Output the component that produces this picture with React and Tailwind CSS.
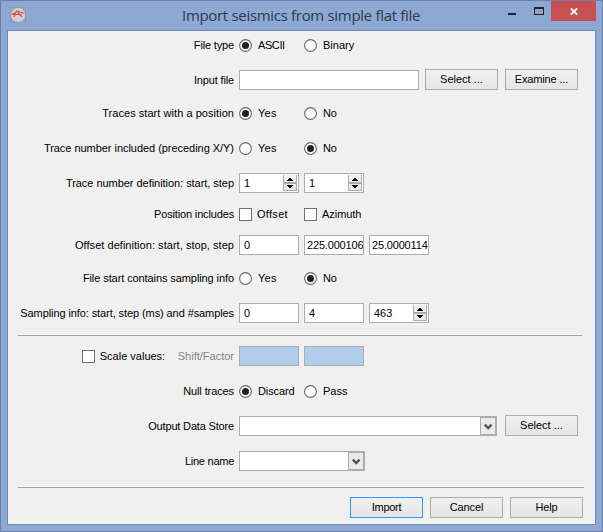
import React from "react";

function Radio({ on, label, cls = "" }) {
  return (
    <div className="flex h-5 w-[65px] shrink-0 items-center gap-1.5">
      <svg width="13" height="13" viewBox="0 0 13 13" className="shrink-0">
        <circle cx="6.5" cy="6.5" r="5.9" fill="#fff" stroke="#666" strokeWidth="1.1" />
        {on && <circle cx="6.5" cy="6.5" r="3.5" fill="#212121" />}
      </svg>
      <span className={cls}>{label}</span>
    </div>
  );
}

function Check({ label, cls = "" }) {
  return (
    <div className="flex h-5 w-[65px] shrink-0 items-center gap-[5px]">
      <span className="size-[13px] shrink-0 border border-[#707070] bg-white" />
      <span className={cls}>{label}</span>
    </div>
  );
}

function Field({ value = "", cls = "w-[60px] bg-white pl-1" }) {
  return (
    <div className={"h-5 shrink-0 overflow-hidden border border-[#abadb3] leading-[18px] " + cls}>
      {value}
    </div>
  );
}

function Spin({ value }) {
  return (
    <div className="flex h-5 w-[60px] shrink-0 justify-between border border-[#abadb3] bg-white pr-px pl-1 leading-[18px]">
      <span>{value}</span>
      <svg width="14" height="18" viewBox="0 0 14 18" shapeRendering="crispEdges">
        <rect x="0" y="1" width="14" height="16" fill="#acacac" />
        <rect x="1" y="1" width="12" height="7" fill="#f0f0f0" />
        <rect x="1" y="10" width="12" height="6" fill="#e9e9e9" />
        <path d="M6 4h2v1h1v1h1v1H4V6h1V5h1z" fill="#000" />
        <path d="M4 11h6v1H9v1H8v1H6v-1H5v-1H4z" fill="#000" />
      </svg>
    </div>
  );
}

function Combo({ cls }) {
  return (
    <div className={"flex h-5 shrink-0 justify-end border border-[#abadb3] bg-white " + cls}>
      <svg width="16" height="18" viewBox="0 0 16 18">
        <rect width="16" height="18" fill="#acacac" />
        <rect x="1" y="1" width="14" height="16" fill="#ebebeb" />
        <path d="M4.8 7.6L8.2 11l3.4-3.4" fill="none" stroke="#555" strokeWidth="2.4" />
      </svg>
    </div>
  );
}

function Button({ label, cls = "border-[#acacac]", text = "" }) {
  return (
    <button className={"flex h-[21px] w-[73px] shrink-0 items-center justify-center border bg-linear-to-b from-[#f0f0f0] to-[#e5e5e5] leading-[19px] " + cls}>
      <span className={text}>{label}</span>
    </button>
  );
}

function Row({ label, cls = "", mt, children }) {
  return (
    <div className={"flex h-5 items-center leading-5 " + mt}>
      <div className={"mr-[5px] flex w-[226px] shrink-0 justify-end " + cls}>{label}</div>
      {children}
    </div>
  );
}

function Rule({ cls }) {
  return <div className={"ml-[10px] h-0.5 border-t border-b border-t-white border-b-[#a0a0a0] " + cls} />;
}

function AppIcon() {
  return (
    <svg width="16" height="16" viewBox="0 0 16 16">
      <rect x="0.5" y="0.5" width="15" height="15" fill="#98a5c0" stroke="#8a9cbd" />
      <circle cx="8" cy="8" r="7" fill="#d4d0d0" />
      <path d="M1.5 7.5L5 6l2-2 3 1 4 1M6 5l-2 5M8 5l1 2 3 3M2 7.5h10" fill="none" stroke="#e04848" strokeWidth="1.2" />
    </svg>
  );
}

export default function App() {
  return (
    <div className="h-[532px] w-[603px] overflow-hidden border border-[#6a80a8] bg-[#8ca8d3] font-['Liberation_Sans',Arial,sans-serif] text-[11px] whitespace-pre text-black">
      <header className="flex h-[29px]">
        <div className="flex w-[550px] shrink-0">
          <div className="mt-1.5 ml-[9px] w-[172px] shrink-0">
            <AppIcon />
          </div>
          <h1 className="w-[323px] shrink-0 font-['Open_Sans',sans-serif] text-[15px] leading-[29px] tracking-[-0.31px] text-[#2f3a4d]">Import seismics from simple flat file</h1>
          <svg width="46" height="29" viewBox="504 1 46 29" shapeRendering="crispEdges" className="shrink-0">
            <rect x="507" y="13" width="8" height="2" fill="#222" />
            <path d="M533 7h10v8h-10zM534 9v5h8V9z" fill="#222" fillRule="evenodd" />
          </svg>
        </div>
        <div className="flex h-5 w-[45px] items-center justify-center bg-[#c75050]">
          <svg width="8" height="7" viewBox="0 0 8 7">
            <path d="M0.8 0.3l6.4 6.4M7.2 0.3L0.8 6.7" stroke="#fff" strokeWidth="1.8" />
          </svg>
        </div>
      </header>
      <main className="ml-1.5 h-[495px] w-[589px] border border-[#7089b5] bg-[#f0f0f0]">
        <Row label="File type" cls="tracking-[-0.16px]" mt="mt-1">
          <Radio on label="ASCII" cls="tracking-[-0.4px]" />
          <Radio label="Binary" />
        </Row>
        <Row label="Input file" cls="tracking-[-0.15px]" mt="mt-[15px]">
          <Field cls="w-[180px] bg-white" />
          <div className="mb-px ml-1.5 flex gap-[7px]">
            <Button label="Select ..." />
            <Button label="Examine ..." text="tracking-[-0.15px]" />
          </div>
        </Row>
        <Row label="Traces start with a position" cls="tracking-[0.05px]" mt="mt-[13px]">
          <Radio on label="Yes" cls="tracking-[0.25px]" />
          <Radio label="No" cls="tracking-[-0.3px]" />
        </Row>
        <Row label="Trace number included (preceding X/Y)" cls="tracking-[-0.04px]" mt="mt-[15px]">
          <Radio label="Yes" cls="tracking-[0.25px]" />
          <Radio on label="No" cls="tracking-[-0.3px]" />
        </Row>
        <Row label="Trace number definition: start, step" cls="tracking-[-0.04px]" mt="mt-[15px]">
          <div className="flex gap-[5px]">
            <Spin value="1" />
            <Spin value="1" />
          </div>
        </Row>
        <Row label="Position includes" cls="tracking-[-0.15px]" mt="mt-[11px]">
          <Check label="Offset" cls="tracking-[0.3px]" />
          <Check label="Azimuth" cls="tracking-[-0.05px]" />
        </Row>
        <Row label="Offset definition: start, stop, step" cls="tracking-[0.04px]" mt="mt-[11px]">
          <div className="flex gap-[5px]">
            <Field value="0" />
            <Field value="225.000106" cls="w-[60px] bg-white pl-0.5 tracking-[-0.17px]" />
            <Field value="25.0000114" cls="w-[60px] bg-white pl-0.5 tracking-[-0.17px]" />
          </div>
        </Row>
        <Row label="File start contains sampling info" cls="tracking-[-0.09px]" mt="mt-[13px]">
          <Radio label="Yes" cls="tracking-[0.25px]" />
          <Radio on label="No" cls="tracking-[-0.3px]" />
        </Row>
        <Row label="Sampling info: start, step (ms) and #samples" cls="tracking-[-0.09px]" mt="mt-[15px]">
          <div className="flex gap-[5px]">
            <Field value="0" />
            <Field value="4" />
            <Spin value="463" />
          </div>
        </Row>
        <Rule cls="mt-[11px] w-[564px]" />
        <Row
          mt="mt-2.5"
          label={
            <>
              <div className="flex w-24 items-center gap-[5px]">
                <span className="size-[13px] shrink-0 border border-[#707070] bg-white" />
                <span>Scale values:</span>
              </div>
              <span className="text-[#848484]">Shift/Factor</span>
            </>
          }
        >
          <div className="flex gap-[5px]">
            <Field cls="w-[60px] bg-[#b0cdec]" />
            <Field cls="w-[60px] bg-[#b0cdec]" />
          </div>
        </Row>
        <Row label="Null traces" cls="tracking-[-0.1px]" mt="mt-[15px]">
          <Radio on label="Discard" cls="tracking-[-0.12px]" />
          <Radio label="Pass" />
        </Row>
        <Row label="Output Data Store" cls="tracking-[-0.17px]" mt="mt-[15px]">
          <Combo cls="w-[258px]" />
          <div className="mb-px ml-2">
            <Button label="Select ..." />
          </div>
        </Row>
        <Row label="Line name" cls="tracking-[-0.26px]" mt="mt-[15px]">
          <Combo cls="w-[126px]" />
        </Row>
        <Rule cls="mt-[15px] w-[566px]" />
        <div className="mt-[9px] ml-[342px] flex gap-[7px]">
          <Button label="Import" cls="border-[#3399ff]" text="tracking-[-0.25px]" />
          <Button label="Cancel" text="tracking-[-0.1px]" />
          <Button label="Help" text="tracking-[-0.2px]" />
        </div>
      </main>
    </div>
  );
}
